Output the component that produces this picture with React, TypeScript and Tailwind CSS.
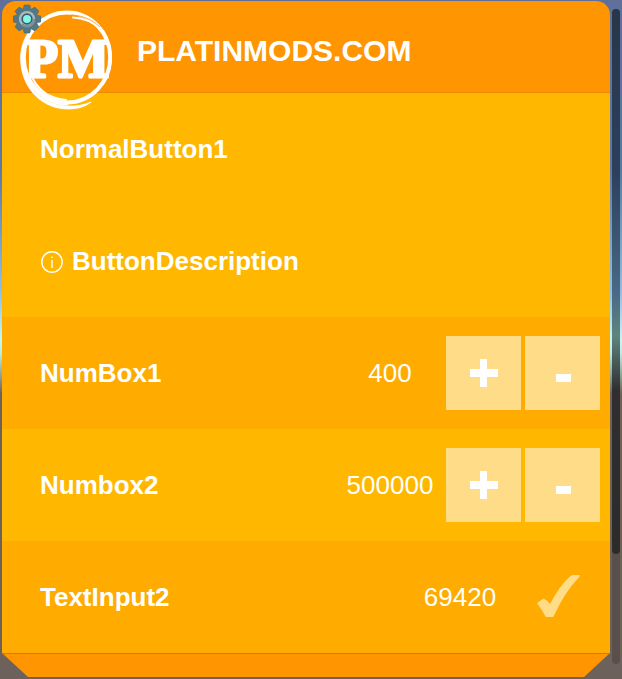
import { useState } from "react";

const rowBase = "flex h-28 items-center pl-[38px] pr-[10px]";
const stepButton =
  "flex h-[74px] w-[75px] items-center justify-center bg-[#ffdd88] text-white";
const valueInput =
  "min-w-0 bg-transparent text-center text-[26px] leading-8 text-white outline-none";

function Gear() {
  return (
    <svg viewBox="0 0 28 30" className="h-[30px] w-7" aria-hidden="true">
      <g fill="#567885" stroke="#456a78" strokeWidth="0.6">
        {[0, 45, 90, 135, 180, 225, 270, 315].map((a) => (
          <path key={a} d="M9.6 7 L11.2 1 H16.8 L18.4 7 Z" transform={`rotate(${a} 14 15)`} />
        ))}
      </g>
      <circle cx="14" cy="15" r="10.6" fill="#567885" />
      <circle cx="14" cy="15" r="6.9" fill="#405a68" stroke="#a9bac1" strokeWidth="2.4" />
      <path d="M9 20 A6.9 6.9 0 0 0 20.9 15" fill="none" stroke="#7c919b" strokeWidth="2.4" />
      <circle cx="14" cy="15" r="4" fill="#80f8e8" />
    </svg>
  );
}

function Logo() {
  return (
    <svg viewBox="0 0 96 102" className="h-[102px] w-24" role="img" aria-label="PM">
      <g fill="none" stroke="#fff">
        <ellipse cx="51" cy="49.5" rx="43.2" ry="45" strokeWidth="4" />
        <path
          d="M22 14 C8 25 3 42 5 57 C8 83 28 101 52 101 C61 101 69 99 75 94 C68 97 60 98.5 52 98 C31 97 14 84 9 64 C5 44 9 27 22 14Z"
          fill="#fff"
          strokeWidth="0.8"
        />
        <path d="M12 69 C20 86 34 96 52 96" strokeWidth="3" />
        <path d="M57 9.5 C67 10 77 14 84 21" strokeWidth="2" strokeLinecap="round" />
        <path d="M17 71 C24 84 36 91 50 92" strokeWidth="2" strokeLinecap="round" />
        <path d="M55 6.9 C68 7.5 78 13 84 19" stroke="#ff9500" strokeWidth="0.8" />
      </g>
      <text
        x="51"
        y="69"
        textAnchor="middle"
        fill="#fff"
        stroke="#fff"
        strokeWidth="3"
        strokeLinejoin="round"
        className="font-['Liberation_Serif',serif] text-[54px] font-bold"
      >
        PM
      </text>
    </svg>
  );
}

function NumBox({ label, initial, tone }: { label: string; initial: number; tone: string }) {
  const [value, setValue] = useState(String(initial));
  const step = (n: number) => setValue((v) => String((Number(v) || 0) + n));
  return (
    <div className={`${rowBase} ${tone}`}>
      <label htmlFor={label} className="flex-1 font-bold">
        {label}
      </label>
      <input
        id={label}
        inputMode="numeric"
        value={value}
        onChange={(e) => setValue(e.target.value)}
        className={`${valueInput} w-28`}
      />
      <div className="flex gap-1">
        <button type="button" aria-label="Increase" onClick={() => step(1)} className={stepButton}>
          <svg viewBox="0 0 28 28" className="size-7" fill="currentColor">
            <path d="M10 0h7v10h11v8H17v10h-7V18H-1v-8h11z" />
          </svg>
        </button>
        <button type="button" aria-label="Decrease" onClick={() => step(-1)} className={stepButton}>
          <svg viewBox="0 0 28 28" className="size-7" fill="currentColor">
            <path d="M7 15h15v8H7z" />
          </svg>
        </button>
      </div>
    </div>
  );
}

export default function App() {
  const [text, setText] = useState("69420");
  return (
    <div className="flex min-h-screen bg-[linear-gradient(#5f6f9a_0%,#5b78a8_25%,#8ebfe8_43%,#c5f7ef_50%,#b9eee5_52%,#6c625b_58%,#6c625b_100%)] pl-[2px] pt-px font-['Liberation_Sans',Arial,sans-serif] text-[26px] leading-8 text-white">
      <main className="flex-1">
        <header className="relative flex h-[92px] items-center rounded-t-[14px] border-b border-[#f08800] bg-[#ff9500] pb-2 pl-[135px] pt-4">
          <div className="absolute left-[14px] top-[7px] z-10">
            <Logo />
          </div>
          <button type="button" aria-label="Settings" className="absolute left-[11px] top-[3px] z-20">
            <Gear />
          </button>
          <h1 className="text-[30px] font-bold leading-9">PLATINMODS.COM</h1>
        </header>
        <button type="button" className={`${rowBase} w-full bg-[#ffb700] text-left font-bold`}>
          NormalButton1
        </button>
        <button type="button" className={`${rowBase} w-full gap-2 bg-[#ffb700] text-left font-bold`}>
          <svg viewBox="0 0 24 24" className="size-6" fill="none" stroke="currentColor" aria-hidden="true">
            <circle cx="12" cy="13" r="10.2" strokeWidth="1.4" />
            <path d="M12 11v8" strokeWidth="1.4" />
            <path d="M12 7.5v1.6" strokeWidth="1.4" />
          </svg>
          ButtonDescription
        </button>
        <NumBox label="NumBox1" initial={400} tone="bg-[#ffab00]" />
        <NumBox label="Numbox2" initial={500000} tone="bg-[#ffb700]" />
        <div className={`${rowBase} bg-[#ffab00]`}>
          <label htmlFor="TextInput2" className="flex-1 font-bold">
            TextInput2
          </label>
          <input
            id="TextInput2"
            value={text}
            onChange={(e) => setText(e.target.value)}
            className={`${valueInput} w-28`}
          />
          <button
            type="button"
            aria-label="Apply"
            className="flex h-[74px] w-[84px] items-center justify-center text-[#ffdd88]"
          >
            <svg viewBox="0 0 44 44" className="size-11" fill="currentColor">
              <path d="M1 28 L7.5 23.5 Q11 25 14 29 Q24 10 34 1.5 Q38 -2 44 0.5 Q43 3 41 4.5 Q29 17 18 40.5 Q17.5 42 16 42 L11 42 Q9.5 42 9 40.5 Q6 35 1 28Z" />
            </svg>
          </button>
        </div>
        <footer className="h-6 border-t border-[#c77d14] bg-[#ff9500] [clip-path:polygon(0_0,100%_0,calc(100%-26px)_100%,26px_100%)]" />
      </main>
      <aside className="w-3 pl-[2px] pr-[2px] pt-2" aria-hidden="true">
        <div className="h-[655px] rounded bg-[#59504b]">
          <div className="h-[545px] rounded bg-[linear-gradient(#293649_0%,#2c405c_30%,#4a6984_52%,#60837f_60%,#302e2e_70%,#2d2b2a_100%)]" />
        </div>
      </aside>
    </div>
  );
}
